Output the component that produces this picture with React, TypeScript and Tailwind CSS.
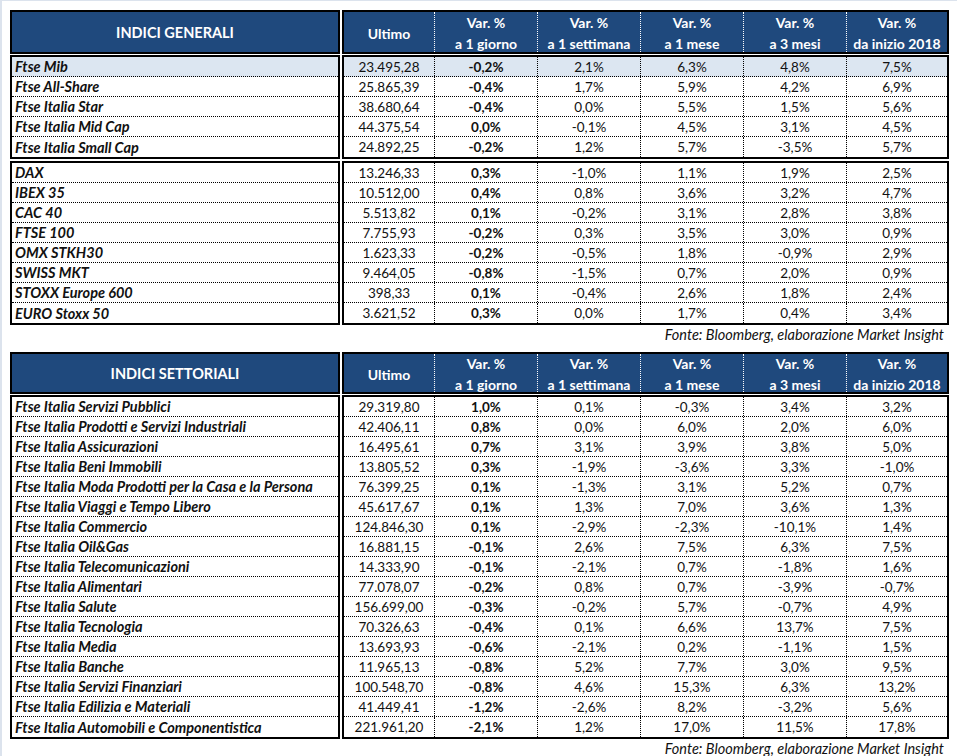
import React from "react";

type Row = string[];

interface TableProps {
  title: string;
  groups: Row[][];
  highlightFirst?: boolean;
  headerHeight: string;
}

const colWidths = ["w-[91px]", "w-[103px]", "w-[103px]", "w-[103px]", "w-[103px]", "w-[100px]"];

const headers = [
  ["Ultimo"],
  ["Var. %", "a 1 giorno"],
  ["Var. %", "a 1 settimana"],
  ["Var. %", "a 1 mese"],
  ["Var. %", "a 3 mesi"],
  ["Var. %", "da inizio 2018"],
];

const generali: Row[][] = [
  [
    ["Ftse Mib", "23.495,28", "-0,2%", "2,1%", "6,3%", "4,8%", "7,5%"],
    ["Ftse All-Share", "25.865,39", "-0,4%", "1,7%", "5,9%", "4,2%", "6,9%"],
    ["Ftse Italia Star", "38.680,64", "-0,4%", "0,0%", "5,5%", "1,5%", "5,6%"],
    ["Ftse Italia Mid Cap", "44.375,54", "0,0%", "-0,1%", "4,5%", "3,1%", "4,5%"],
    ["Ftse Italia Small Cap", "24.892,25", "-0,2%", "1,2%", "5,7%", "-3,5%", "5,7%"],
  ],
  [
    ["DAX", "13.246,33", "0,3%", "-1,0%", "1,1%", "1,9%", "2,5%"],
    ["IBEX 35", "10.512,00", "0,4%", "0,8%", "3,6%", "3,2%", "4,7%"],
    ["CAC 40", "5.513,82", "0,1%", "-0,2%", "3,1%", "2,8%", "3,8%"],
    ["FTSE 100", "7.755,93", "-0,2%", "0,3%", "3,5%", "3,0%", "0,9%"],
    ["OMX STKH30", "1.623,33", "-0,2%", "-0,5%", "1,8%", "-0,9%", "2,9%"],
    ["SWISS MKT", "9.464,05", "-0,8%", "-1,5%", "0,7%", "2,0%", "0,9%"],
    ["STOXX Europe 600", "398,33", "0,1%", "-0,4%", "2,6%", "1,8%", "2,4%"],
    ["EURO Stoxx 50", "3.621,52", "0,3%", "0,0%", "1,7%", "0,4%", "3,4%"],
  ],
];

const settoriali: Row[][] = [
  [
    ["Ftse Italia Servizi Pubblici", "29.319,80", "1,0%", "0,1%", "-0,3%", "3,4%", "3,2%"],
    ["Ftse Italia Prodotti e Servizi Industriali", "42.406,11", "0,8%", "0,0%", "6,0%", "2,0%", "6,0%"],
    ["Ftse Italia Assicurazioni", "16.495,61", "0,7%", "3,1%", "3,9%", "3,8%", "5,0%"],
    ["Ftse Italia Beni Immobili", "13.805,52", "0,3%", "-1,9%", "-3,6%", "3,3%", "-1,0%"],
    ["Ftse Italia Moda Prodotti per la Casa e la Persona", "76.399,25", "0,1%", "-1,3%", "3,1%", "5,2%", "0,7%"],
    ["Ftse Italia Viaggi e Tempo Libero", "45.617,67", "0,1%", "1,3%", "7,0%", "3,6%", "1,3%"],
    ["Ftse Italia Commercio", "124.846,30", "0,1%", "-2,9%", "-2,3%", "-10,1%", "1,4%"],
    ["Ftse Italia Oil&Gas", "16.881,15", "-0,1%", "2,6%", "7,5%", "6,3%", "7,5%"],
    ["Ftse Italia Telecomunicazioni", "14.333,90", "-0,1%", "-2,1%", "0,7%", "-1,8%", "1,6%"],
    ["Ftse Italia Alimentari", "77.078,07", "-0,2%", "0,8%", "0,7%", "-3,9%", "-0,7%"],
    ["Ftse Italia Salute", "156.699,00", "-0,3%", "-0,2%", "5,7%", "-0,7%", "4,9%"],
    ["Ftse Italia Tecnologia", "70.326,63", "-0,4%", "0,1%", "6,6%", "13,7%", "7,5%"],
    ["Ftse Italia Media", "13.693,93", "-0,6%", "-2,1%", "0,2%", "-1,1%", "1,5%"],
    ["Ftse Italia Banche", "11.965,13", "-0,8%", "5,2%", "7,7%", "3,0%", "9,5%"],
    ["Ftse Italia Servizi Finanziari", "100.548,70", "-0,8%", "4,6%", "15,3%", "6,3%", "13,2%"],
    ["Ftse Italia Edilizia e Materiali", "41.449,41", "-1,2%", "-2,6%", "8,2%", "-3,2%", "5,6%"],
    ["Ftse Italia Automobili e Componentistica", "221.961,20", "-2,1%", "1,2%", "17,0%", "11,5%", "17,8%"],
  ],
];

const MarketTable: React.FC<TableProps> = ({ title, groups, highlightFirst, headerHeight }) => {
  return (
    <div className="w-[939px] flex flex-col">
      {/* header */}
      <div className={`flex gap-[2px] ${headerHeight}`}>
        <div className="w-[330px] pt-[2px] border-2 border-black bg-[#1f497d] flex items-center justify-center text-white font-bold">
          {title}
        </div>
        <div className="w-[607px] border-2 border-black bg-[#1f497d] flex text-white font-bold text-[14px]">
          {headers.map((h, i) => (
            <div
              key={i}
              className={`${colWidths[i]} pt-[2px] flex flex-col items-center justify-center leading-[21px] ${
                i < 5 ? "border-r border-dotted border-white" : ""
              }`}
            >
              {h.map((line) => (
                <span key={line}>{line}</span>
              ))}
            </div>
          ))}
        </div>
      </div>

      {groups.map((rows, g) => (
        <div key={g} className={`flex gap-[2px] ${g === 0 ? "mt-[1px]" : "mt-[2px]"}`}>
          <div className="w-[330px] border-2 border-black flex flex-col">
            {rows.map((r, i) => (
              <div
                key={r[0]}
                className={`h-[20px] pl-[3px] pt-[1px] flex items-center font-bold italic whitespace-nowrap ${
                  i < rows.length - 1 ? "border-b border-dotted border-black" : "h-[19px]"
                } ${highlightFirst && g === 0 && i === 0 ? "bg-[#dce6f1]" : ""}`}
              >
                {r[0]}
              </div>
            ))}
          </div>
          <div className="w-[607px] border-2 border-black flex flex-col text-[13.5px]">
            {rows.map((r, i) => (
              <div
                key={r[0]}
                className={`h-[20px] flex ${
                  i < rows.length - 1 ? "border-b border-dotted border-black" : "h-[19px]"
                } ${highlightFirst && g === 0 && i === 0 ? "bg-[#dce6f1]" : ""}`}
              >
                {r.slice(1).map((v, c) => (
                  <div
                    key={c}
                    className={`${colWidths[c]} pt-[1px] flex items-center justify-center ${
                      c === 1 ? "font-bold" : ""
                    } ${c < 5 ? "border-r border-dotted border-black" : ""}`}
                  >
                    {v}
                  </div>
                ))}
              </div>
            ))}
          </div>
        </div>
      ))}
      <div className="h-[20px] leading-[20px] text-right pr-[5px] italic">
        Fonte: Bloomberg, elaborazione Market Insight
      </div>
    </div>
  );
};

export default function App() {
  return (
    <div
      className="w-[957px] h-[756px] bg-white border-t border-l-2 border-[#dce3ed] pl-[8px] pt-[9px] text-[14.5px] text-[#111] overflow-hidden"
      style={{ fontFamily: "Lato, 'Liberation Sans', sans-serif" }}
    >
      <MarketTable title="INDICI GENERALI" groups={generali} highlightFirst headerHeight="h-[44px]" />
      <div className="mt-[7px]">
        <MarketTable title="INDICI SETTORIALI" groups={settoriali} headerHeight="h-[42px]" />
      </div>
    </div>
  );
}
